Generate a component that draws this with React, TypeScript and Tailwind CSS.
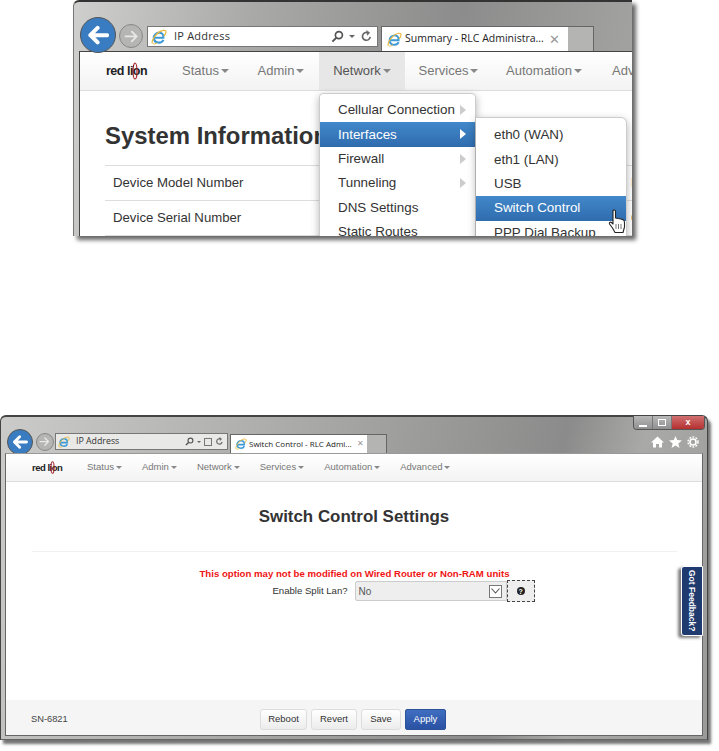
import React from "react";

function Caret({ small }: { small?: boolean }) {
  return small ? (
    <span className="ml-[2px] inline-block h-0 w-0 border-x-[3px] border-t-[3px] border-x-transparent border-t-[#888] align-middle" />
  ) : (
    <span className="ml-[2px] inline-block h-0 w-0 border-x-[4px] border-t-[4px] border-x-transparent border-t-[#888] align-middle" />
  );
}

function IeIcon({ size }: { size: number }) {
  return (
    <svg width={size} height={size} viewBox="0 0 20 20" fill="none" className="shrink-0">
      <path d="M4.5 11 H15.5 C16 6.5 13 4.5 10.5 4.5 C6.5 4.5 3.5 7.5 3.5 11 C3.5 15 6.5 17 10 17 C12.5 17 14.5 15.8 15.5 13.5" stroke="#3d9ad6" strokeWidth="2.6" />
      <path d="M1.5 18 C0.5 14 7 4 14 2 C17 1 19.5 2 18.5 5 C18 6.5 17 8 16 9" stroke="#e8b83a" strokeWidth="1.5" />
      <path d="M2 18 C3 19.5 6 18.5 8 17" stroke="#e8b83a" strokeWidth="1.2" />
    </svg>
  );
}

function BackButton({ big }: { big?: boolean }) {
  const s = big ? 36 : 26;
  return (
    <span
      className={
        big
          ? "z-10 flex h-[36px] w-[36px] shrink-0 items-center justify-center rounded-full border border-[#555] bg-[#3a7cc1]"
          : "z-10 flex h-[26px] w-[26px] shrink-0 items-center justify-center rounded-full border border-[#555] bg-[#3a7cc1]"
      }
    >
      <svg width={s * 0.62} height={s * 0.62} viewBox="0 0 20 20" fill="none" stroke="#fff" strokeWidth="3.6" strokeLinecap="round" strokeLinejoin="round">
        <path d="M18 10 H3 M9.5 3.5 L3 10 L9.5 16.5" />
      </svg>
    </span>
  );
}

function ForwardButton({ big }: { big?: boolean }) {
  const s = big ? 24 : 18;
  return (
    <span
      className={
        big
          ? "flex h-[24px] w-[24px] shrink-0 items-center justify-center rounded-full border border-[#888] bg-[#b5b5b3]"
          : "flex h-[18px] w-[18px] shrink-0 items-center justify-center rounded-full border border-[#888] bg-[#b5b5b3]"
      }
    >
      <svg width={s * 0.62} height={s * 0.62} viewBox="0 0 20 20" fill="none" stroke="#e8e8e8" strokeWidth="2.4" strokeLinecap="round" strokeLinejoin="round">
        <path d="M2 10 H17 M10.5 3.5 L17 10 L10.5 16.5" />
      </svg>
    </span>
  );
}

function Search({ size }: { size: number }) {
  return (
    <svg width={size} height={size} viewBox="0 0 14 14" fill="none" stroke="#555" strokeWidth="1.8">
      <circle cx="8.5" cy="5.5" r="3.8" />
      <path d="M5.8 8.2 L1.5 12.5" strokeWidth="2.2" />
    </svg>
  );
}

function Refresh({ size }: { size: number }) {
  return (
    <svg width={size} height={size} viewBox="0 0 14 14" fill="none" stroke="#666" strokeWidth="1.8">
      <path d="M11 7.5 A4.2 4.2 0 1 1 8.5 3" />
      <path d="M7 0.5 L10.5 3 L7.5 6" fill="#666" strokeWidth="0.6" />
    </svg>
  );
}

function Logo({ big }: { big?: boolean }) {
  return big ? (
    <span className="relative inline-block whitespace-nowrap text-[12.5px] font-bold leading-none tracking-[-0.5px] text-[#222]">
      red lion
      <svg width="6" height="18" viewBox="0 0 6 18" fill="none" stroke="#a51d22" strokeWidth="1.2" className="absolute left-[26px] top-[-3px]">
        <ellipse cx="3" cy="9" rx="2" ry="8" />
      </svg>
    </span>
  ) : (
    <span className="relative inline-block whitespace-nowrap text-[9.5px] font-bold leading-none tracking-[-0.5px] text-[#222]">
      red lion
      <svg width="5" height="13" viewBox="0 0 5 13" fill="none" stroke="#a51d22" strokeWidth="1.1" className="absolute left-[18px] top-[-2px]">
        <ellipse cx="2.5" cy="6.5" rx="1.6" ry="5.8" />
      </svg>
    </span>
  );
}

function Arrow({ color }: { color: string }) {
  return (
    <svg width="6" height="10" viewBox="0 0 6 10" className="absolute right-[9px] top-[7px]">
      <path d="M0 0 L6 5 L0 10 Z" fill={color} />
    </svg>
  );
}

function MenuItem({ label, arrow, active }: { label: string; arrow?: boolean; active?: boolean }) {
  return (
    <div
      className={
        active
          ? "relative flex h-[24.4px] items-center whitespace-nowrap bg-[linear-gradient(#4288ca,#2f6cae)] pl-[18px] text-[13.4px] text-white"
          : "relative flex h-[24.4px] items-center whitespace-nowrap pl-[18px] text-[13.4px] text-[#333]"
      }
    >
      {label}
      {arrow && <Arrow color={active ? "#fff" : "#ccc"} />}
    </div>
  );
}

function TopWindow() {
  const nav = [
    { l: "Status", w: "w-[75px]" },
    { l: "Admin", w: "w-[76px]" },
    { l: "Network", w: "w-[86px]", a: true },
    { l: "Services", w: "w-[87px]" },
    { l: "Automation", w: "w-[104px]" },
    { l: "Advanced", w: "w-[100px]" },
  ];
  return (
    <div className="ml-[73px] h-[236px] w-[559px] shrink-0 rounded-tl-[6px] shadow-[4px_4px_4px_rgba(0,0,0,0.6)]">
      <div className="flex h-full flex-col overflow-hidden rounded-tl-[6px] border-t-2 border-l border-t-[#333] border-l-[#777] bg-[linear-gradient(100deg,#cfcfcd_0%,#a9a9a7_30%,#8c8c8c_65%,#a6a6a4_100%)] pl-[5px]">
        <div className="flex h-[49px] shrink-0 items-end">
          <div className="mb-[-2px] ml-[1px] flex items-center">
            <BackButton big />
          </div>
          <div className="mb-[3px] ml-[3px]">
            <ForwardButton big />
          </div>
          <div className="mb-[4px] ml-[4px] flex h-[21px] w-[231px] items-center border border-[#777] bg-white pl-[3px] pr-[4px]">
            <IeIcon size={16} />
            <span className="ml-[7px] font-['Open_Sans',sans-serif] text-[11px] tracking-[0.2px] text-[#333]">IP Address</span>
            <span className="ml-auto flex items-center gap-[5px]">
              <Search size={13} />
              <span className="h-0 w-0 border-x-[3px] border-t-[3px] border-x-transparent border-t-[#666]" />
              <Refresh size={13} />
            </span>
          </div>
          <div className="ml-[3px] flex h-[25px] w-[187px] items-center border-t border-l border-[#666] bg-white pl-[5px]">
            <IeIcon size={15} />
            <span className="ml-[3px] whitespace-nowrap font-['Open_Sans',sans-serif] text-[10.5px] text-[#222]">Summary - RLC Administra...</span>
            <span className="ml-[5px] text-[13px] leading-none text-[#999]">✕</span>
          </div>
          <div className="h-[25px] w-[26px] border-t border-r border-[#666] bg-[#b4b4b2]" />
        </div>

        <div className="relative flex min-h-0 flex-1 flex-col border-t border-l border-[#444] bg-white">
          <div className="flex h-[39px] shrink-0 items-stretch border-b border-[#ddd] bg-[linear-gradient(#ffffff,#f3f3f3)]">
            <div className="flex w-[88px] shrink-0 items-center pl-[26px]">
              <Logo big />
            </div>
            {nav.map((n) => (
              <div
                key={n.l}
                className={
                  n.a
                    ? "flex shrink-0 items-center justify-center whitespace-nowrap bg-[#e7e7e7] text-[13px] text-[#555] " + n.w
                    : "flex shrink-0 items-center justify-center whitespace-nowrap text-[13px] text-[#777] " + n.w
                }
              >
                {n.l}
                <Caret />
              </div>
            ))}
          </div>
          <div className="flex flex-col pl-[25px]">
            <h1 className="mt-[30px] h-[44px] text-[23.9px] font-bold leading-[30px] text-[#333]">System Information</h1>
            <div className="flex h-[35px] items-center justify-between border-t border-[#ddd] pl-[8px] text-[13.2px] text-[#333]">
              <span>Device Model Number</span>
              <span className="mr-[-2px] w-[3px] overflow-hidden">R</span>
            </div>
            <div className="flex h-[35px] items-center justify-between border-t border-[#ddd] pl-[8px] text-[13.2px] text-[#333]">
              <span>Device Serial Number</span>
              <span className="mr-[-2px] w-[3px] overflow-hidden">6</span>
            </div>
            <div className="border-t border-[#ddd]" />
          </div>

          <div className="absolute left-[239px] top-[41px] w-[157px] rounded-t-[4px] border border-[#ccc] bg-white pt-[3px] shadow-[0_3px_8px_rgba(0,0,0,0.3)]">
            <div className="pt-[1px]" />
            <MenuItem label="Cellular Connection" arrow />
            <MenuItem label="Interfaces" arrow active />
            <MenuItem label="Firewall" arrow />
            <MenuItem label="Tunneling" arrow />
            <MenuItem label="DNS Settings" />
            <MenuItem label="Static Routes" />
          </div>
          <div className="absolute left-[396px] top-[65px] w-[151px] rounded-tr-[6px] border border-l-0 border-[#ccc] bg-white pt-[4px] shadow-[0_3px_8px_rgba(0,0,0,0.3)]">
            <div className="pt-[1px]" />
            <MenuItem label="eth0 (WAN)" />
            <MenuItem label="eth1 (LAN)" />
            <MenuItem label="USB" />
            <MenuItem label="Switch Control" active />
            <MenuItem label="PPP Dial Backup" />
          </div>
          <svg width="18" height="25" viewBox="0 0 18 25" className="absolute left-[528px] top-[157px]">
            <path
              d="M5 1.5 C6 0.5 7.5 1 7.5 2.5 V9 L10 9.5 L13 10 L15.5 11 C16.5 11.5 16.5 13 16.5 14 V18 L15 23.5 H7 L4.5 19 L1.5 15 C1 14 2 12.5 3.5 13.5 L5 15 Z"
              fill="#fff"
              stroke="#222"
              strokeWidth="1.1"
              strokeLinejoin="round"
            />
            <path d="M8 15 V20 M10.5 15 V20 M13 15 V20" stroke="#555" strokeWidth="0.8" />
          </svg>
        </div>
      </div>
    </div>
  );
}

function BottomWindow() {
  const nav = ["Status", "Admin", "Network", "Services", "Automation", "Advanced"];
  return (
    <div className="mt-[179px] h-[325px] w-[708px] shrink-0 rounded-t-[6px] shadow-[3px_4px_3px_rgba(0,0,0,0.55)]">
      <div className="flex h-full flex-col rounded-t-[6px] border border-t-2 border-[#444] border-b-[#666] bg-[linear-gradient(105deg,#cbcbc9_0%,#a8a8a6_40%,#8b8b8b_72%,#a9a9a7_82%,#9a9a98_100%)] px-[4px] pb-[3px]">
        <div className="relative flex h-[36px] shrink-0 items-end">
          <div className="mb-[-2px] ml-[2px]">
            <BackButton />
          </div>
          <div className="mb-[2px] ml-[3px]">
            <ForwardButton />
          </div>
          <div className="mb-[3px] ml-[1px] flex h-[17px] w-[173px] items-center border border-[#777] bg-[#e9e9e7] pl-[2px] pr-[3px]">
            <IeIcon size={12} />
            <span className="ml-[6px] font-['Open_Sans',sans-serif] text-[8.8px] text-[#333]">IP Address</span>
            <span className="ml-auto flex items-center gap-[3px]">
              <Search size={9} />
              <span className="h-0 w-0 border-x-[2px] border-t-[2px] border-x-transparent border-t-[#666]" />
              <span className="h-[8px] w-[8px] border border-[#777]" />
              <Refresh size={9} />
            </span>
          </div>
          <div className="ml-[2px] flex h-[19px] w-[137px] items-center border-t border-l border-[#666] bg-white pl-[4px]">
            <IeIcon size={12} />
            <span className="ml-[2px] whitespace-nowrap font-['Open_Sans',sans-serif] text-[8px] text-[#222]">Switch Control - RLC Admi...</span>
            <span className="ml-[5px] text-[8px] leading-none text-[#999]">✕</span>
          </div>
          <div className="h-[19px] w-[20px] border-t border-r border-[#666] bg-[#b4b4b2]" />
          <div className="ml-auto mb-[5px] mr-[4px] flex items-center gap-[5px]">
            <svg width="13" height="12" viewBox="0 0 13 12" fill="#fff">
              <path d="M6.5 0.5 L13 6.5 H11 V11.5 H8 V8 H5 V11.5 H2 V6.5 H0 Z" />
            </svg>
            <svg width="13" height="12" viewBox="0 0 13 12" fill="#fff">
              <path d="M6.5 0 L8.2 4 L13 4.5 L9.3 7.4 L10.5 12 L6.5 9.5 L2.5 12 L3.7 7.4 L0 4.5 L4.8 4 Z" />
            </svg>
            <svg width="12" height="12" viewBox="0 0 12 12" fill="none" stroke="#fff">
              <circle cx="6" cy="6" r="3" strokeWidth="1.6" />
              <circle cx="6" cy="6" r="5" strokeWidth="1.4" strokeDasharray="1.8 1.4" />
            </svg>
          </div>
          <div className="absolute right-[-2px] top-[-1px] flex h-[14px] w-[72px] overflow-hidden rounded-b-[4px] border border-t-0 border-[#555]">
            <span className="flex w-[19px] items-end justify-center border-r border-[#777] bg-[linear-gradient(#b8b8b8,#8f8f8f)] pb-[2px]">
              <span className="h-[2px] w-[8px] bg-white" />
            </span>
            <span className="flex w-[19px] items-center justify-center border-r border-[#777] bg-[linear-gradient(#b8b8b8,#8f8f8f)]">
              <span className="h-[7px] w-[8px] border border-white" />
            </span>
            <span className="flex flex-1 items-center justify-center bg-[linear-gradient(#d07070,#b52f2f)] text-[9px] font-bold leading-none text-white">x</span>
          </div>
        </div>

        <div className="relative flex min-h-0 flex-1 flex-col border border-[#666] border-t-[#999] bg-white">
          <div className="flex h-[28px] shrink-0 items-stretch border-b border-[#ddd] bg-[linear-gradient(#ffffff,#f3f3f3)]">
            <div className="flex w-[71px] shrink-0 items-center pl-[26px]">
              <Logo />
            </div>
            {nav.map((n) => (
              <div key={n} className="flex shrink-0 items-center whitespace-nowrap px-[10px] text-[9.5px] text-[#777]">
                {n}
                <Caret small />
              </div>
            ))}
          </div>

          <div className="flex min-h-0 flex-1 flex-col items-center">
            <h2 className="mt-[25px] text-[16.9px] font-bold leading-[20px] text-[#333]">Switch Control Settings</h2>
            <div className="mt-[24px] h-px w-[645px] bg-[#f0f0f0]" />
            <p className="ml-[1px] mt-[16px] text-[9.65px] font-bold leading-[12px] text-[#f01414]">
              This option may not be modified on Wired Router or Non-RAM units
            </p>
            <div className="ml-[99px] flex items-center">
              <span className="mr-[7px] text-[9.6px] text-[#333]">Enable Split Lan?</span>
              <div className="flex h-[20px] w-[152px] items-center rounded-l-[2px] border border-[#ccc] bg-[#eee] pl-[3px] pr-[4px] text-[10px] text-[#555]">
                No
                <span className="ml-auto flex h-[13px] w-[13px] items-center justify-center border border-[#777] bg-white">
                  <svg width="9" height="6" viewBox="0 0 9 6" fill="none" stroke="#555" strokeWidth="1.1">
                    <path d="M0.5 0.5 L4.5 5 L8.5 0.5" />
                  </svg>
                </span>
              </div>
              <div className="flex h-[22px] w-[28px] items-center justify-center border border-dashed border-[#444] bg-[#eee]">
                <span className="flex h-[8px] w-[8px] items-center justify-center rounded-full bg-[#222] text-[7px] font-bold leading-none text-white">?</span>
              </div>
            </div>
          </div>

          <div className="flex h-[35px] shrink-0 items-center bg-[#f5f5f5] pl-[25px] pt-[4px]">
            <span className="w-[229px] text-[9.3px] text-[#444]">SN-6821</span>
            <div className="flex items-center gap-[4px]">
              {[
                ["Reboot", "w-[47px]"],
                ["Revert", "w-[46px]"],
                ["Save", "w-[40px]"],
              ].map(([t, w]) => (
                <span
                  key={t}
                  className={
                    "flex h-[21px] items-center justify-center rounded-[3px] border border-[#ddd] bg-[linear-gradient(#ffffff,#ececec)] text-[9.5px] text-[#333] " + w
                  }
                >
                  {t}
                </span>
              ))}
              <span className="flex h-[21px] w-[41px] items-center justify-center rounded-[2px] border border-[#2a5199] bg-[linear-gradient(#3f6ec0,#2a51a3)] text-[9.5px] text-white">
                Apply
              </span>
            </div>
          </div>

          <div className="absolute right-[-1px] top-[112px] flex h-[70px] w-[22px] items-center justify-center rounded-l-[3px] border border-white bg-[#1f3a6e] shadow-[-3px_2px_3px_rgba(0,0,0,0.5)]">
            <span className="whitespace-nowrap text-[8.5px] font-bold text-white [writing-mode:vertical-rl]">Got Feedback?</span>
          </div>
        </div>
      </div>
    </div>
  );
}

export default function App() {
  return (
    <div className="flex h-[751px] w-[719px] flex-col overflow-hidden bg-white font-['Liberation_Sans',Arial,sans-serif]">
      <TopWindow />
      <BottomWindow />
    </div>
  );
}
